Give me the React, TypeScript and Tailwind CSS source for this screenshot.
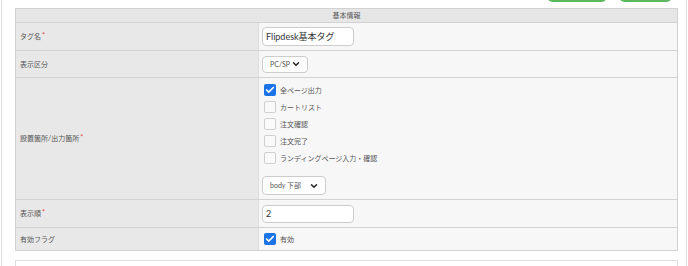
import { ChevronDown, Check } from "lucide-react";

const FONT = { fontFamily: 'Lato, "Noto Sans CJK JP", sans-serif' };

const BASHO = [
  { label: "全ページ出力", checked: true },
  { label: "カートリスト", checked: false },
  { label: "注文確認", checked: false },
  { label: "注文完了", checked: false },
  { label: "ランディングページ入力・確認", checked: false },
];

function Box({ checked }: { checked: boolean }) {
  return checked ? (
    <span className="flex h-[12px] w-[12px] shrink-0 items-center justify-center rounded-[2px] bg-[#1a73e8]">
      <Check size={10} strokeWidth={4} color="#fff" />
    </span>
  ) : (
    <span className="h-[12px] w-[12px] shrink-0 rounded-[2px] border border-[#cfcfcf] bg-[#fafafa]" />
  );
}

function Select({ value, w }: { value: string; w: string }) {
  return (
    <div className={`flex shrink-0 items-center justify-between rounded-[4px] border border-[#cccccc] bg-white pl-[7px] pr-[6px] text-[7px] text-[#555] ${w}`}>
      <span>{value}</span>
      <ChevronDown size={10} strokeWidth={3.5} color="#222" />
    </div>
  );
}

function Label({ text, req }: { text: string; req?: boolean }) {
  return (
    <div className="flex w-[243px] shrink-0 items-center self-stretch border-r border-[#dddddd] bg-[#e8e8e8] pl-[4px] text-[7px] text-[#555]">
      {text}
      {req && <span className="ml-[1px] -mt-[3px] text-[7px] text-[#e53935]">*</span>}
    </div>
  );
}

export default function App() {
  return (
    <div className="h-[266px] w-[688px] overflow-hidden bg-white" style={FONT}>
      <div className="ml-[1px] h-full w-[686px] border-x border-[#dedede] pl-[13px]">
        <div className="flex h-[8px] w-[663px] items-end justify-end gap-[10px] overflow-hidden pr-[5px]">
          <div className="mb-[6px] h-[30px] w-[62px] shrink-0 rounded-[7px] border-2 border-[#5cb85c] bg-white" />
          <div className="mb-[6px] h-[30px] w-[55px] shrink-0 rounded-[7px] border-2 border-[#5cb85c] bg-white" />
        </div>

        <div className="w-[663px] border border-[#d2d2d2]">
          <div className="flex h-[14px] items-center justify-center border-b border-[#d2d2d2] bg-[#e6e6e6] text-[7px] text-[#555]">
            基本情報
          </div>

          <div className="flex h-[28px] border-b border-[#d2d2d2]">
            <Label text="タグ名" req />
            <div className="flex flex-1 items-center bg-[#f7f7f7] pl-[3px]">
              <div className="flex h-[19px] w-[92px] items-center rounded-[4px] border border-[#cccccc] bg-white pl-[3px] text-[9px] text-[#333]">
                Flipdesk基本タグ
              </div>
            </div>
          </div>

          <div className="flex h-[27px] border-b border-[#d2d2d2]">
            <Label text="表示区分" />
            <div className="flex flex-1 items-center bg-[#f7f7f7] pl-[3px]">
              <Select value="PC/SP" w="h-[17px] w-[46px]" />
            </div>
          </div>

          <div className="flex h-[122px] border-b border-[#d2d2d2]">
            <Label text="設置箇所/出力箇所" req />
            <div className="flex flex-1 flex-col items-start bg-[#f7f7f7] pl-[3px] pt-[6px]">
              {BASHO.map((b) => (
                <div key={b.label} className="flex h-[17px] items-start gap-[4px] pl-[2px]">
                  <Box checked={b.checked} />
                  <span className="text-[7px] leading-[12px] text-[#555]">{b.label}</span>
                </div>
              ))}
              <div className="mt-[7px]">
                <Select value="body 下部" w="h-[19px] w-[64px]" />
              </div>
            </div>
          </div>

          <div className="flex h-[28px] border-b border-[#d2d2d2]">
            <Label text="表示順" req />
            <div className="flex flex-1 items-center bg-[#f7f7f7] pl-[3px]">
              <div className="flex h-[18px] w-[92px] items-center rounded-[4px] border border-[#cccccc] bg-white pl-[3px] text-[9px] text-[#333]">
                2
              </div>
            </div>
          </div>

          <div className="flex h-[22px]">
            <Label text="有効フラグ" />
            <div className="flex flex-1 items-center gap-[4px] bg-[#f7f7f7] pl-[5px]">
              <Box checked />
              <span className="text-[7px] text-[#555]">有効</span>
            </div>
          </div>
        </div>

        <div className="mt-[9px] h-[20px] w-[663px] border border-[#dddddd] bg-white" />
      </div>
    </div>
  );
}
